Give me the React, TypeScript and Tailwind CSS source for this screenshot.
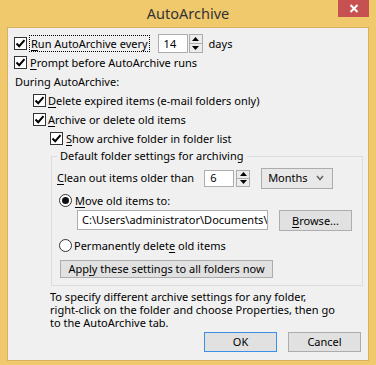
import type { ReactNode } from 'react';

const font = { fontFamily: '"Noto Sans", "Open Sans", sans-serif' };

function Check({ checked = true }: { checked?: boolean }) {
  return (
    <span className="flex h-[13px] w-[13px] shrink-0 items-center justify-center border border-[#333] bg-white">
      {checked && (
        <svg width="11" height="11" viewBox="0 0 11 11">
          <polyline points="1.5,5.5 4.2,8.2 9.5,2.2" fill="none" stroke="#000" strokeWidth="2" />
        </svg>
      )}
    </span>
  );
}

function Radio({ on = false }: { on?: boolean }) {
  return (
    <span className="flex h-[13px] w-[13px] shrink-0 items-center justify-center rounded-full border border-[#333] bg-white">
      {on && <span className="h-[7px] w-[7px] rounded-full bg-[#111]" />}
    </span>
  );
}

function Spin({ h }: { h: string }) {
  return (
    <span className={`flex w-[14px] shrink-0 flex-col border border-[#acacac] bg-[#ececec] ${h}`}>
      <span className="flex flex-1 items-center justify-center border-b border-[#acacac]">
        <svg width="7" height="4" viewBox="0 0 7 4">
          <polygon points="0,4 3.5,0 7,4" fill="#000" />
        </svg>
      </span>
      <span className="flex flex-1 items-center justify-center">
        <svg width="7" height="4" viewBox="0 0 7 4">
          <polygon points="0,0 3.5,4 7,0" fill="#000" />
        </svg>
      </span>
    </span>
  );
}

function Btn({ children, className = '' }: { children: ReactNode; className?: string }) {
  return (
    <span className={`flex shrink-0 items-center justify-center whitespace-nowrap border bg-[#e1e1e1] text-[#000] ${className}`}>
      <span>{children}</span>
    </span>
  );
}

function U({ children }: { children: ReactNode }) {
  return <span className="underline underline-offset-2">{children}</span>;
}

export default function App() {
  return (
    <div className="flex h-[365px] w-[376px] flex-col bg-[#f1c96d] text-[11px] text-[#000]" style={font}>
      {/* title bar */}
      <div className="grid h-[27px] grid-cols-[1fr_auto_1fr] items-start">
        <div />
        <div className="pt-[3px] text-[14.5px] leading-[20px] text-[#333]">AutoArchive</div>
        <div className="flex justify-end pr-[7px]">
          <span className="flex h-[17px] w-[31px] items-center justify-center bg-[#c75050]">
            <svg width="10" height="9" viewBox="0 0 10 9">
              <path d="M1.5 1 L8.5 8 M8.5 1 L1.5 8" stroke="#fff" strokeWidth="2" />
            </svg>
          </span>
        </div>
      </div>

      {/* client area */}
      <div className="mx-[7px] mb-[4px] flex flex-1 flex-col border border-[#d8b060] bg-[#f0f0f0] pl-[6px] pt-[6px] leading-[14px]">
        <div className="flex h-[19px] items-center">
          <Check />
          <span className="ml-[2px] flex h-[17px] items-center whitespace-nowrap border border-dotted border-[#000] px-[1px]">
            <span>
              <U>R</U>un AutoArchive every
            </span>
          </span>
          <span className="ml-[8px] flex h-[19px] w-[30px] items-center border border-[#abadb3] bg-white pl-[5px]">14</span>
          <span className="ml-[1px] flex">
            <Spin h="h-[19px]" />
          </span>
          <span className="ml-[6px]">days</span>
        </div>

        <div className="flex h-[19px] items-center">
          <Check />
          <span className="ml-[3px]">
            <U>P</U>rompt before AutoArchive runs
          </span>
        </div>

        <div className="flex h-[19px] items-center pl-[1px]">During AutoArchive:</div>

        <div className="flex h-[19px] items-center pl-[19px]">
          <Check />
          <span className="ml-[2px]">
            <U>D</U>elete expired items (e-mail folders only)
          </span>
        </div>

        <div className="flex h-[19px] items-center pl-[19px]">
          <Check />
          <span className="ml-[2px]">
            <U>A</U>rchive or delete old items
          </span>
        </div>

        <div className="flex h-[19px] items-center pl-[36px]">
          <Check />
          <span className="ml-[3px]">
            <U>S</U>how archive folder in folder list
          </span>
        </div>

        <fieldset className="ml-[37px] mt-[1px] w-[312px] border border-[#dcdcdc] pb-[7px] pl-[5px]">
          <legend className="px-[3px] leading-[14px]">Default folder settings for archiving</legend>

          <div className="mt-[4px] flex h-[22px] items-center">
            <span>
              <U>C</U>lean out items older than
            </span>
            <span className="ml-[10px] flex h-[17px] w-[30px] items-center border border-[#abadb3] bg-white pl-[5px]">6</span>
            <span className="ml-[2px] flex">
              <Spin h="h-[17px]" />
            </span>
            <span className="ml-[11px] flex h-[21px] w-[72px] items-center justify-between border border-[#acacac] bg-[#e8e8e8] pl-[6px] pr-[8px]">
              Months
              <svg width="8" height="6" viewBox="0 0 8 6">
                <polyline points="1,1 4,4.5 7,1" fill="none" stroke="#666" strokeWidth="1.6" />
              </svg>
            </span>
          </div>

          <div className="mt-[2px] flex h-[19px] items-center pl-[2px]">
            <Radio on />
            <span className="ml-[3px]">
              <U>M</U>ove old items to:
            </span>
          </div>

          <div className="flex items-start pl-[20px]">
            <span className="flex h-[20px] w-[191px] shrink-0 items-center overflow-hidden whitespace-nowrap border border-[#abadb3] bg-white pl-[4px]">
              C:\Users\administrator\Documents\Outlook Files\archive.pst
            </span>
            <Btn className="ml-[11px] h-[21px] w-[73px] border-[#adadad]">
              <U>B</U>rowse...
            </Btn>
          </div>

          <div className="mt-[5px] flex h-[19px] items-center pl-[2px]">
            <Radio />
            <span className="ml-[2px]">
              Permanently delet<U>e</U> old items
            </span>
          </div>

          <div className="flex">
            <Btn className="ml-[3px] mt-[5px] h-[18px] w-[213px] border-[#adadad]">
              App<U>l</U>y these settings to all folders now
            </Btn>
          </div>
        </fieldset>

        <p className="ml-[36px] mt-[4px] whitespace-nowrap leading-[13px]">
          To specify different archive settings for any folder,
          <br />
          right-click on the folder and choose Properties, then go
          <br />
          to the AutoArchive tab.
        </p>

        <div className="mr-[7px] mt-[3px] flex justify-end gap-[11px]">
          <Btn className="h-[20px] w-[73px] border-[#3c8fe6]">OK</Btn>
          <Btn className="h-[20px] w-[73px] border-[#adadad]">Cancel</Btn>
        </div>
      </div>
    </div>
  );
}
